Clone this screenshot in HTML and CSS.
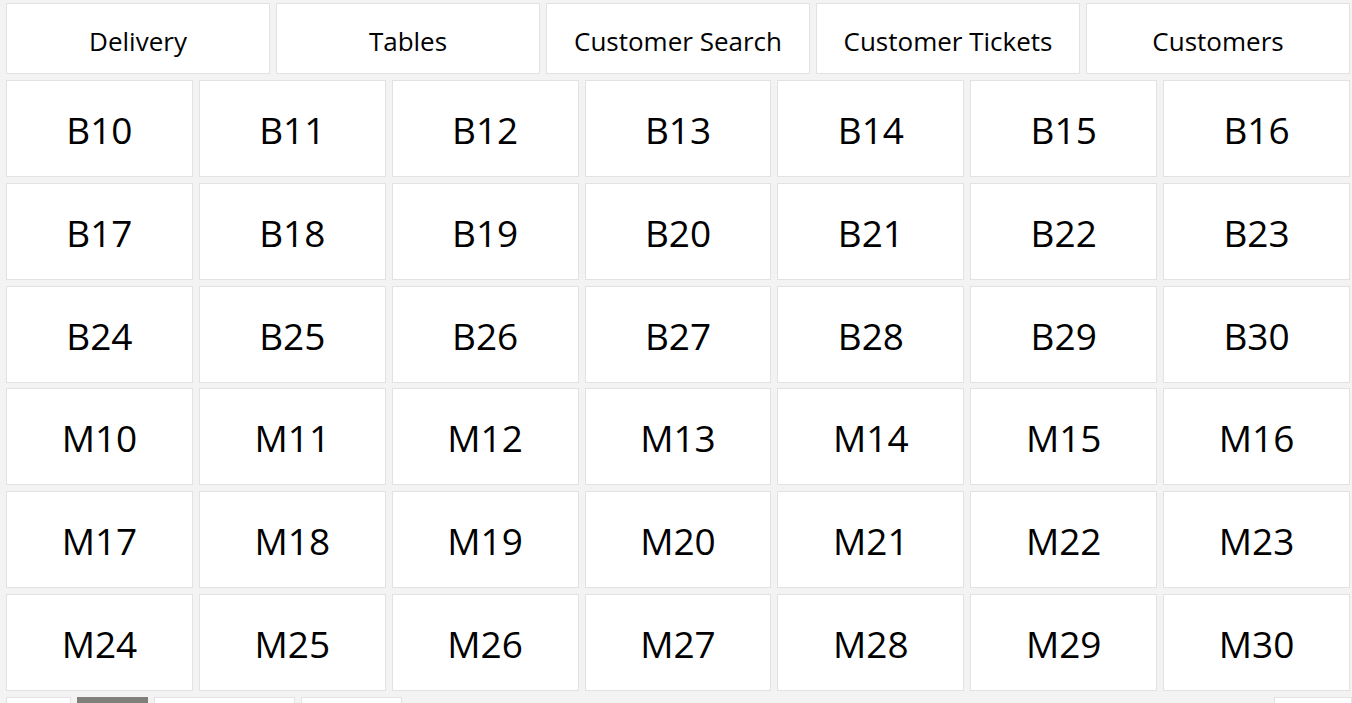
FILE: index.html
```
<!DOCTYPE html>
<html>
<head>
<meta charset="utf-8">
<link rel="stylesheet" href="styles.css">
</head>
<body>
<div class="page">
  <div class="tabs">
    <div class="tab">Delivery</div>
    <div class="tab">Tables</div>
    <div class="tab">Customer Search</div>
    <div class="tab">Customer Tickets</div>
    <div class="tab">Customers</div>
  </div>
  <div class="grid">
    <div class="cell">B10</div><div class="cell">B11</div><div class="cell">B12</div><div class="cell">B13</div><div class="cell">B14</div><div class="cell">B15</div><div class="cell">B16</div>
    <div class="cell">B17</div><div class="cell">B18</div><div class="cell">B19</div><div class="cell">B20</div><div class="cell">B21</div><div class="cell">B22</div><div class="cell">B23</div>
    <div class="cell">B24</div><div class="cell">B25</div><div class="cell">B26</div><div class="cell">B27</div><div class="cell">B28</div><div class="cell">B29</div><div class="cell">B30</div>
    <div class="cell">M10</div><div class="cell">M11</div><div class="cell">M12</div><div class="cell">M13</div><div class="cell">M14</div><div class="cell">M15</div><div class="cell">M16</div>
    <div class="cell">M17</div><div class="cell">M18</div><div class="cell">M19</div><div class="cell">M20</div><div class="cell">M21</div><div class="cell">M22</div><div class="cell">M23</div>
    <div class="cell">M24</div><div class="cell">M25</div><div class="cell">M26</div><div class="cell">M27</div><div class="cell">M28</div><div class="cell">M29</div><div class="cell">M30</div>
  </div>
  <div class="bottom">
    <div class="bbtn w65"></div>
    <div class="bbtn active w71"></div>
    <div class="bbtn w141"></div>
    <div class="bbtn w101"></div>
    <div class="spacer"></div>
    <div class="bbtn w79"></div>
  </div>
</div>
</body>
</html>
```
FILE: styles.css
```
html, body {
  margin: 0;
  padding: 0;
  background: #f3f3f3;
  overflow: hidden;
  height: 703px;
}
.page {
  padding: 3px 2px 0 6px;
  font-family: "Open Sans", "Noto Sans", sans-serif;
  color: #000;
}
.tabs {
  display: flex;
  gap: 6px;
  height: 71px;
}
.tab {
  flex: 1;
  box-sizing: border-box;
  background: #fff;
  border: 1px solid #e2e2e2;
  display: flex;
  align-items: center;
  justify-content: center;
  font-size: 26px;
  padding-top: 5px;
}
.grid {
  margin-top: 6px;
  display: grid;
  grid-template-columns: repeat(7, 1fr);
  grid-template-rows: repeat(6, 97px);
  column-gap: 6px;
  row-gap: 5.8px;
}
.cell {
  box-sizing: border-box;
  background: #fff;
  border: 1px solid #e2e2e2;
  display: flex;
  align-items: center;
  justify-content: center;
  font-size: 37px;
  padding-top: 2px;
}
.bottom {
  margin-top: 6px;
  display: flex;
  gap: 6px;
  height: 40px;
  margin-right: -2px;
}
.bbtn {
  box-sizing: border-box;
  background: #fff;
  border: 1px solid #e2e2e2;
}
.bbtn.active {
  background: #807f7a;
  border-color: #807f7a;
}
.w65 { width: 65px; }
.w71 { width: 71px; }
.w141 { width: 141px; }
.w101 { width: 101px; }
.w79 { width: 78px; }
.spacer { flex: 1; }
```
